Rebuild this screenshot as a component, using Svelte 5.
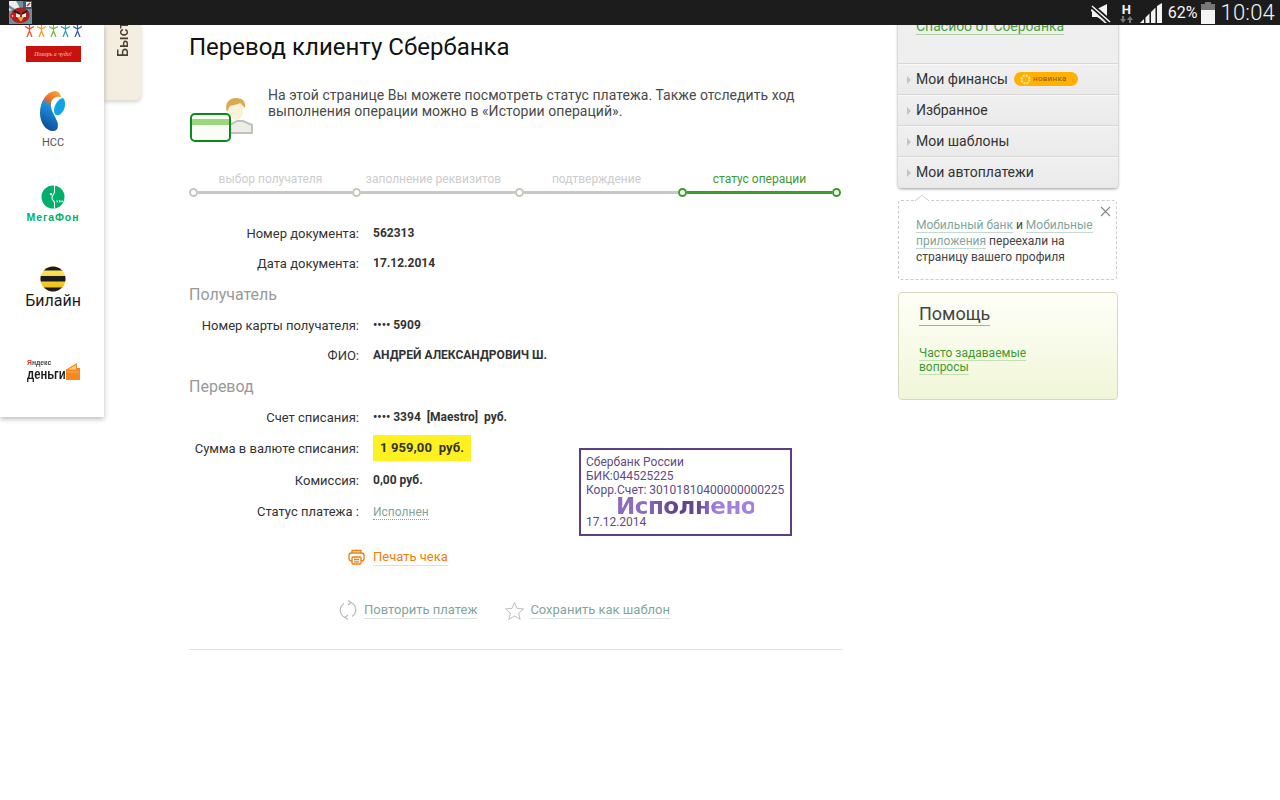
<script lang="ts">
	const menu = ['Мои финансы', 'Избранное', 'Мои шаблоны', 'Мои автоплатежи'];
	const steps = [
		{ label: 'выбор получателя', active: false },
		{ label: 'заполнение реквизитов', active: false },
		{ label: 'подтверждение', active: false },
		{ label: 'статус операции', active: true }
	];
	const figures = ['#e8502a', '#f0a020', '#7ab648', '#30a0a0', '#3a5ab0'];
</script>

<div class="screen">
	<header class="statusbar">
		<svg class="app-icon" width="23" height="23" viewBox="0 0 23 23">
			<rect width="23" height="23" fill="#6f8ea0" />
			<path d="M0 0l7 0 4 7-5 1-6-4zM3 9L0 7v3z" fill="#e8eef2" />
			<path d="M14 0h9v8h-9z" fill="#3c5a70" />
			<rect x="17" y="1" width="5" height="5" fill="#f2f2f2" />
			<path d="M18 5l3-3" stroke="#d02020" stroke-width="1.400" />
			<path d="M3 11c3-6 14-6 17 0 2 5-1 11-9 11S1 16 3 11z" fill="#a8201f" />
			<path d="M7 12l4 1v3H7zM13 13l4-1v4h-4z" fill="#f4ead8" />
			<path d="M5 10l6 3M18 10l-5 3" stroke="#1a1a1a" stroke-width="1.600" />
			<path d="M8 16h7l-3 5z" fill="#e8a030" />
			<circle cx="3.500" cy="15" r="2.500" fill="#e81020" />
			<circle cx="3.500" cy="15" r="0.800" fill="#fff" />
		</svg>
		<div class="status-right">
			<svg width="20" height="20" viewBox="0 0 20 20">
				<path d="M1 6h5l10-5v18l-10-5H1z" fill="#f4f4f4" />
				<path d="M0 2l19 17" stroke="#1c1c1c" stroke-width="5" />
				<path d="M1 3l18 16M-1 6l17 15" stroke="#f4f4f4" stroke-width="1.500" />
			</svg>
			<div class="net">
				<span class="net-h">H</span>
				<svg width="13" height="7" viewBox="0 0 13 7">
					<path d="M2 0h2v3h2L3 7 0 3h2zM9 7h2V4h2L10 0 7 4h2z" fill="#777" />
				</svg>
			</div>
			<svg width="24" height="20" viewBox="0 0 24 20">
				<path d="M0 20l4-4v4zM5.500 20v-5.500l4-4V20zM11 20V9l4.500-4.500V20zM17 20V3l5-3v20z" fill="#f4f4f4" />
			</svg>
			<span class="battery-pct">62%</span>
			<div class="battery">
				<div class="battery-cap"></div>
				<div class="battery-body"><div class="battery-fill"></div></div>
			</div>
			<span class="clock">10:04</span>
		</div>
	</header>

	<div class="page">
		<aside class="partners">
			<div class="partner first">
				<div class="figures">
					{#each figures as color}
						<svg width="9" height="12" viewBox="0 0 9 12">
							<path d="M4.500 0v6M0 1.500l4.500 2.500 4.500-2.500M4.500 6L2 12M4.500 6L7 12" stroke={color} stroke-width="1.300" fill="none" />
						</svg>
					{/each}
				</div>
				<div class="banner">Поверь в чудо!</div>
			</div>
			<div class="partner nss">
				<svg width="26" height="40" viewBox="0 0 26 40">
					<defs>
						<linearGradient id="rtMain" x1="0.700" y1="0" x2="0.400" y2="1">
							<stop offset="0" stop-color="#f7a030" />
							<stop offset="0.280" stop-color="#ea6a28" />
							<stop offset="0.420" stop-color="#1e8fd8" />
							<stop offset="1" stop-color="#0b4a9c" />
						</linearGradient>
					</defs>
					<path d="M15 0C6 1 0 11 0 22c0 10 6 18 13 18 5 0 6-5 4-10-3-7-7-12-6-18 1-5 5-7 10-6C20 2 18 0 15 0z" fill="url(#rtMain)" />
					<path d="M23 7c4 4 2 14-4 17-3 1-5-1-5-4 0-6 4-12 9-13z" fill="#12a4e4" />
				</svg>
				<span class="nss-name">НСС</span>
			</div>
			<div class="partner megafon">
				<svg width="24" height="24" viewBox="0 0 24 24">
					<circle cx="12" cy="12" r="11.500" fill="#00b06a" />
					<path d="M13.500 0.500v6c0 3-2.500 3.500-2.500 6.500s2.500 2 2.500 5v5.500" stroke="#fff" stroke-width="1.100" fill="none" />
					<rect x="9" y="8" width="2" height="2.200" fill="#fff" />
					<path d="M15.500 15.500h1.600v1.800h-1.600zM18 15.500h1.600v1.800H18zM20.500 15.500h1.200v1.800h-1.200z" fill="#fff" />
				</svg>
				<span class="megafon-name">МегаФон</span>
			</div>
			<div class="partner beeline">
				<svg width="26" height="26" viewBox="0 0 26 26">
					<defs>
						<clipPath id="beeClip"><circle cx="13" cy="13" r="12.500" /></clipPath>
						<linearGradient id="beeGold" x1="0" y1="0" x2="0" y2="1">
							<stop offset="0" stop-color="#fff070" />
							<stop offset="1" stop-color="#f0b400" />
						</linearGradient>
					</defs>
					<g clip-path="url(#beeClip)">
						<rect width="26" height="26" fill="url(#beeGold)" />
						<path d="M0 0h26v4.500H0zM0 10h26v5.500H0zM0 21.500h26V26H0z" fill="#1c1c1c" />
					</g>
				</svg>
				<span class="beeline-name">Билайн</span>
			</div>
			<div class="partner yandex">
				<div class="yandex-text">
					<span class="yandex-top"><b>Я</b>ндекс</span>
					<span class="yandex-bottom">деньги</span>
				</div>
				<svg width="14" height="17" viewBox="0 0 14 17">
					<path d="M0 6.500L11 0v5h3v12H0z" fill="#f5891f" />
					<path d="M2 6.500L10 2v4.500z" fill="#ffc880" />
					<path d="M1 9h12" stroke="#ffb060" stroke-width="0.800" />
				</svg>
			</div>
		</aside>

		<div class="quick-tab"><span>Быстрые</span></div>

		<main class="content">
			<h1>Перевод клиенту Сбербанка</h1>

			<div class="intro">
				<svg class="intro-icon" width="64" height="48" viewBox="0 0 64 48">
					<path d="M38 36v-7l9-5h6l9 4v8z" fill="#ededea" stroke="#c0c0bc" stroke-width="2" />
					<path d="M38 10c0-6 4-8 8-8s8 2 8 8c0 7-3 13-8 13s-8-6-8-13z" fill="#fbf3d8" />
					<path d="M37 15c-3-8 2-14 9-14s10 4 9 10c-2-2-3-4-5-5-3 2-8 2-10 3z" fill="#dba955" />
					<rect x="1" y="17" width="39" height="27" rx="4" fill="#fcfdf6" stroke="#0a8a1e" stroke-width="2" />
					<rect x="2" y="22" width="37" height="6" fill="#9bd87c" />
				</svg>
				<p>На этой странице Вы можете посмотреть статус платежа. Также отследить ход выполнения операции можно в «Истории операций».</p>
			</div>

			<div class="stepper">
				{#each steps as step, i}
					<div class="step" class:active={step.active}>
						<span class="step-label">{step.label}</span>
						<div class="step-track">
							<span class="node"></span>
							<span class="bar"></span>
							{#if i === steps.length - 1}
								<span class="node"></span>
							{/if}
						</div>
					</div>
				{/each}
			</div>

			<div class="details">
				<div class="row"><span class="label">Номер документа:</span><b>562313</b></div>
				<div class="row"><span class="label">Дата документа:</span><b>17.12.2014</b></div>
				<h2>Получатель</h2>
				<div class="row"><span class="label">Номер карты получателя:</span><b>•••• 5909</b></div>
				<div class="row"><span class="label">ФИО:</span><b>АНДРЕЙ АЛЕКСАНДРОВИЧ Ш.</b></div>
				<h2>Перевод</h2>
				<div class="row"><span class="label">Счет списания:</span><b class="pre">•••• 3394  [Maestro]  руб.</b></div>
				<div class="row tall"><span class="label">Сумма в валюте списания:</span><b class="amount">1 959,00  руб.</b></div>
				<div class="row tall"><span class="label">Комиссия:</span><b>0,00 руб.</b></div>
				<div class="row"><span class="label">Статус платежа :</span><span class="status-link">Исполнен</span></div>

				<div class="stamp">
					<div>Сбербанк России</div>
					<div>БИК:044525225</div>
					<div>Корр.Счет: 30101810400000000225</div>
					<div class="stamp-big">Исполнено</div>
					<div class="stamp-date">17.12.2014</div>
				</div>
			</div>

			<div class="print-row">
				<svg width="17" height="16" viewBox="0 0 17 16" fill="none" stroke="#f07d0a" stroke-width="1.300">
					<path d="M4 4V1.500h9V4" />
					<rect x="1" y="4" width="15" height="8" rx="2.500" />
					<rect x="4" y="8" width="9" height="7" rx="1" fill="#fff" />
					<path d="M6 10.500h5M6 12.800h5" />
				</svg>
				<span class="print-link">Печать чека</span>
			</div>

			<div class="actions">
				<div class="action">
					<svg class="repeat-icon" width="18" height="20" viewBox="0 0 18 20" fill="none" stroke="#bbb" stroke-width="1.200">
						<path d="M5 3.500A8 8 0 0 0 6 17.500" />
						<path d="M13 16.500A8 8 0 0 0 12 2.500" />
						<path d="M9 0.500L12 2.500 9 5M9 19.500L6 17.500 9 15" />
					</svg>
					<span class="action-link">Повторить платеж</span>
				</div>
				<div class="action">
					<svg width="19" height="19" viewBox="0 0 20 19" fill="none" stroke="#bbb" stroke-width="1">
						<path d="M10 1l2.700 6.300 6.800.5-5.200 4.400 1.700 6.600-6-3.500-6 3.500 1.700-6.600L.5 7.800l6.800-.5z" />
					</svg>
					<span class="action-link">Сохранить как шаблон</span>
				</div>
			</div>

			<hr />
		</main>

		<aside class="side">
			<nav class="side-menu">
				<div class="side-top"><a class="thanks" href="#top">Спасибо от Сбербанка</a></div>
				{#each menu as item, i}
					<div class="menu-item">
						<i class="arrow"></i>
						<span>{item}</span>
						{#if i === 0}
							<span class="badge">
								<svg width="11" height="11" viewBox="0 0 11 11" fill="none" stroke="#ffe9a0" stroke-width="2" stroke-dasharray="2 1.100"><circle cx="5.500" cy="5.500" r="4" /></svg>
								новинка
							</span>
						{/if}
					</div>
				{/each}
			</nav>

			<div class="notice">
				<svg class="notice-caret" width="14" height="7" viewBox="0 0 14 7">
					<path d="M0 7l7-6 7 6" fill="#fff" stroke="#ccc" stroke-width="1" />
				</svg>
				<svg class="notice-close" width="11" height="11" viewBox="0 0 11 11">
					<path d="M1 1l9 9M10 1l-9 9" stroke="#888" stroke-width="1.200" />
				</svg>
				<p><span class="soft-link">Мобильный банк</span> и <span class="soft-link">Мобильные приложения</span> переехали на страницу вашего профиля</p>
			</div>

			<div class="help">
				<div class="help-title"><span>Помощь</span></div>
				<div class="help-links"><span>Часто задаваемые</span> <span>вопросы</span></div>
			</div>
		</aside>
	</div>
</div>

<style>
	:global(body) {
		margin: 0;
		background: #fff;
	}

	.screen {
		width: 1280px;
		height: 800px;
		overflow: hidden;
		font-family: Roboto, 'Liberation Sans', sans-serif;
		color: #222;
	}

	.statusbar {
		height: 25px;
		background: #1c1c1c;
		display: flex;
		align-items: center;
		justify-content: space-between;
		padding: 0 5px 0 9px;
	}

	.app-icon {
		display: block;
	}

	.status-right {
		display: flex;
		align-items: center;
		color: #f4f4f4;
	}

	.net {
		display: flex;
		flex-direction: column;
		align-items: center;
		margin: 0 7px 0 9px;
		width: 13px;
	}

	.net-h {
		font: bold 13px/13px Roboto, sans-serif;
	}

	.net svg {
		display: block;
	}

	.battery-pct {
		font-size: 16px;
		margin: 0 3px 0 4px;
	}

	.battery {
		width: 14px;
		display: flex;
		flex-direction: column;
		align-items: center;
	}

	.battery-cap {
		width: 6px;
		height: 2px;
		background: #777;
	}

	.battery-body {
		width: 14px;
		height: 20px;
		background: #777;
		display: flex;
		align-items: flex-end;
	}

	.battery-fill {
		width: 100%;
		height: 14px;
		background: #f4f4f4;
	}

	.clock {
		font-size: 22px;
		font-weight: 300;
		margin-left: 6px;
		letter-spacing: 0.2px;
	}

	.page {
		display: flex;
		align-items: flex-start;
		height: 775px;
		overflow: hidden;
	}

	.partners {
		width: 104px;
		height: 392px;
		flex: none;
		background: #fff;
		box-shadow: 0 2px 5px rgba(0, 0, 0, 0.28);
		display: flex;
		flex-direction: column;
		align-items: center;
		position: relative;
		z-index: 1;
	}

	.partner {
		display: flex;
		flex-direction: column;
		align-items: center;
	}

	.first {
		height: 66px;
		gap: 9px;
		margin-left: 2px;
	}

	.figures {
		display: flex;
		gap: 3px;
		height: 12px;
	}

	.figures svg {
		display: block;
	}

	.banner {
		width: 55px;
		height: 16px;
		background: #c8120c;
		color: #eec8c0;
		font: italic 6px/16px 'Liberation Serif', serif;
		text-align: center;
		white-space: nowrap;
	}

	.nss {
		height: 93px;
		margin-left: 2px;
	}

	.nss svg {
		display: block;
	}

	.nss-name {
		font-size: 11px;
		line-height: 13px;
		margin-top: 5px;
		color: #555;
	}

	.megafon {
		height: 82px;
		margin-left: 2px;
	}

	.megafon svg {
		display: block;
		margin-top: 1px;
	}

	.megafon-name {
		font: bold 10.500px/12px 'Liberation Sans', sans-serif;
		color: #00b06a;
		margin-top: 2px;
		letter-spacing: 0.9px;
	}

	.beeline {
		height: 93px;
		margin-left: 2px;
	}

	.beeline svg {
		display: block;
	}

	.beeline-name {
		font: 400 16px/16px Roboto, sans-serif;
		color: #1c1c1c;
		margin-top: 1px;
	}

	.yandex {
		flex-direction: row;
		align-items: flex-end;
		gap: 3px;
		margin-left: 2px;
	}

	.yandex-text {
		display: flex;
		flex-direction: column;
	}

	.yandex-top {
		font: bold 8px/8px 'Liberation Sans', sans-serif;
		color: #444;
		transform: scaleX(0.85);
		transform-origin: left;
	}

	.yandex-top b {
		color: #e03030;
	}

	.yandex-bottom {
		font: bold 15px/13px 'Liberation Sans', sans-serif;
		color: #1c1c1c;
		transform: scaleX(0.75);
		transform-origin: left;
		width: 36px;
	}

	.quick-tab {
		width: 37px;
		height: 75px;
		flex: none;
		background: #f4eee0;
		border-radius: 0 0 5px 0;
		box-shadow: 0 2px 4px rgba(0, 0, 0, 0.18);
		overflow: hidden;
		display: flex;
		align-items: flex-start;
		justify-content: center;
	}

	.quick-tab span {
		writing-mode: vertical-rl;
		transform: rotate(180deg);
		font-size: 14.500px;
		font-weight: 500;
		line-height: 18px;
		color: #4a4030;
		flex: none;
		white-space: nowrap;
		height: 60px;
		margin: -28px 0 0 2px;
		text-align: left;
	}

	.content {
		width: 653px;
		flex: none;
		margin-left: 48px;
	}

	h1 {
		font-size: 24px;
		font-weight: 400;
		line-height: 32px;
		margin: 6px 0 0;
		color: #111;
	}

	.intro {
		display: flex;
		margin-top: 24px;
		height: 84px;
	}

	.intro-icon {
		display: block;
		margin: 10px 14px 0 1px;
		flex: none;
	}

	.intro p {
		margin: 0;
		width: 545px;
		font-size: 14px;
		line-height: 16px;
		letter-spacing: 0.05px;
		color: #4a4a4a;
	}

	.stepper {
		display: grid;
		grid-template-columns: repeat(4, 163px);
	}

	.step {
		display: flex;
		flex-direction: column;
		align-items: center;
		gap: 1px;
		font-size: 12px;
		color: #ccc;
	}

	.step.active {
		color: #3d9a2e;
	}

	.step-label {
		line-height: 16px;
	}

	.step-track {
		width: 100%;
		display: flex;
		align-items: center;
	}

	.node {
		flex: none;
		width: 9px;
		height: 9px;
		box-sizing: border-box;
		border: 2px solid #c8c5ba;
		border-radius: 50%;
		background: #fff;
	}

	.bar {
		flex: 1;
		height: 3px;
		background: #c8c8c8;
	}

	.active .node {
		border-color: #3d9a2e;
	}

	.active .bar {
		background: #3d9a2e;
	}

	.details {
		position: relative;
		margin-top: 21px;
	}

	.row {
		display: flex;
		align-items: center;
		height: 30px;
		font-size: 13px;
	}

	.row.tall {
		height: 32px;
	}

	.label {
		width: 170px;
		text-align: right;
		margin-right: 14px;
		color: #333;
		flex: none;
	}

	.row b {
		font-size: 12px;
		font-weight: 700;
		color: #333;
	}

	.row b.pre,
	.row b.amount {
		white-space: pre;
	}

	.row b.amount {
		background: #fff01f;
		font-size: 13px;
		line-height: 26px;
		padding: 0 7px;
		letter-spacing: 0.1px;
	}

	.status-link {
		color: #7fa69c;
		font-size: 12px;
		border-bottom: 1px dotted #7fa69c;
		line-height: 14px;
		margin-top: 2px;
	}

	h2 {
		font-size: 16px;
		font-weight: 400;
		line-height: 31px;
		padding-top: 1px;
		color: #999;
		margin: 0;
	}

	.stamp {
		position: absolute;
		left: 390px;
		top: 230px;
		width: 213px;
		height: 88px;
		box-sizing: border-box;
		border: 2px solid #5b3f80;
		padding: 5px;
		font-size: 12px;
		line-height: 14px;
		color: #5f4a85;
		white-space: nowrap;
	}

	.stamp-big {
		font: bold 23px/18px 'DejaVu Sans', sans-serif;
		width: 138px;
		margin: 0 0 0 30px;
		height: 18px;
		letter-spacing: -0.5px;
		background: linear-gradient(90deg, #8d6cbd 0, #8d6cbd 20%, #5e3f87 45%, #6a4a95 60%, #a27fdc 72%, #a680de 100%);
		-webkit-background-clip: text;
		background-clip: text;
		color: transparent;
	}

	.print-row {
		display: flex;
		align-items: center;
		justify-content: flex-start;
		gap: 8px;
		margin: 16px 0 0 159px;
		height: 30px;
	}

	.print-link {
		color: #f07d0a;
		font-size: 13px;
		border-bottom: 1px solid #fdd9b8;
		line-height: 16px;
	}

	.actions {
		display: flex;
		align-items: center;
		gap: 28px;
		margin: 23px 0 0 150px;
		height: 30px;
	}

	.action {
		display: flex;
		align-items: center;
		gap: 6px;
	}

	.action svg {
		flex: none;
	}

	.repeat-icon {
		margin-right: 1px;
	}

	.action-link {
		color: #7fa69c;
		font-size: 13px;
		line-height: 16px;
		border-bottom: 1px solid #d8e4e2;
	}

	hr {
		border: 0;
		border-top: 1px solid #e4e4e4;
		margin: 24px 0 0;
	}

	.side {
		width: 220px;
		flex: none;
		margin-left: 56px;
	}

	.side-menu {
		margin-top: -20px;
		background: #efefef;
		border-radius: 0 0 4px 4px;
		box-shadow: 0 1px 3px rgba(0, 0, 0, 0.4);
		overflow: hidden;
	}

	.side-top {
		height: 58px;
		padding: 11px 0 0 18px;
		box-sizing: border-box;
	}

	.thanks {
		color: #4aa03a;
		font-size: 14px;
		line-height: 16px;
		display: inline-block;
		text-decoration: none;
		border-bottom: 1px solid #a8d0a0;
	}

	.menu-item {
		height: 31px;
		box-sizing: border-box;
		border-top: 1px solid #d6d6d6;
		box-shadow: inset 0 1px 0 #f8f8f8;
		display: flex;
		align-items: center;
		padding-left: 9px;
		font-size: 14px;
		color: #333;
		background: linear-gradient(#f0f0f0, #eaeaea);
	}

	.menu-item:last-child {
		height: 32px;
		padding-bottom: 1px;
	}

	.arrow {
		width: 0;
		height: 0;
		border-left: 4px solid #c4c4c4;
		border-top: 4px solid transparent;
		border-bottom: 4px solid transparent;
		margin: 2px 5px 0 0;
	}

	.badge {
		margin-left: 6px;
		width: 64px;
		height: 14px;
		box-sizing: border-box;
		border-radius: 7px;
		background: #ffb000;
		color: #8a5a00;
		font-size: 8px;
		line-height: 14px;
		letter-spacing: 0.3px;
		display: flex;
		align-items: center;
		gap: 2px;
		padding-left: 6px;
	}

	.notice {
		position: relative;
		margin-top: 12px;
		width: 219px;
		height: 80px;
		box-sizing: border-box;
		border: 1px dashed #ccc;
		border-radius: 3px;
		padding: 16px 20px 0 17px;
		font-size: 12px;
		line-height: 16px;
		color: #444;
	}

	.notice p {
		margin: 0;
	}

	.notice-caret {
		position: absolute;
		left: 16px;
		top: -7px;
	}

	.notice-close {
		position: absolute;
		right: 5px;
		top: 5px;
	}

	.soft-link {
		color: #7fa69c;
		border-bottom: 1px solid #c4d8d4;
	}

	.help {
		margin-top: 12px;
		height: 108px;
		box-sizing: border-box;
		border: 1px solid #d8d8c0;
		border-radius: 4px;
		background: linear-gradient(#fffff8, #f0f6d8);
		padding: 10px 20px;
	}

	.help-title span {
		display: inline-block;
		font-size: 18px;
		line-height: 22px;
		color: #444;
		border-bottom: 1px solid #aaa;
	}

	.help-links {
		margin-top: 20px;
		width: 120px;
		font-size: 12px;
		line-height: 14px;
		color: #3d9a2e;
	}

	.help-links span {
		border-bottom: 1px solid #c4e0b0;
	}
</style>
